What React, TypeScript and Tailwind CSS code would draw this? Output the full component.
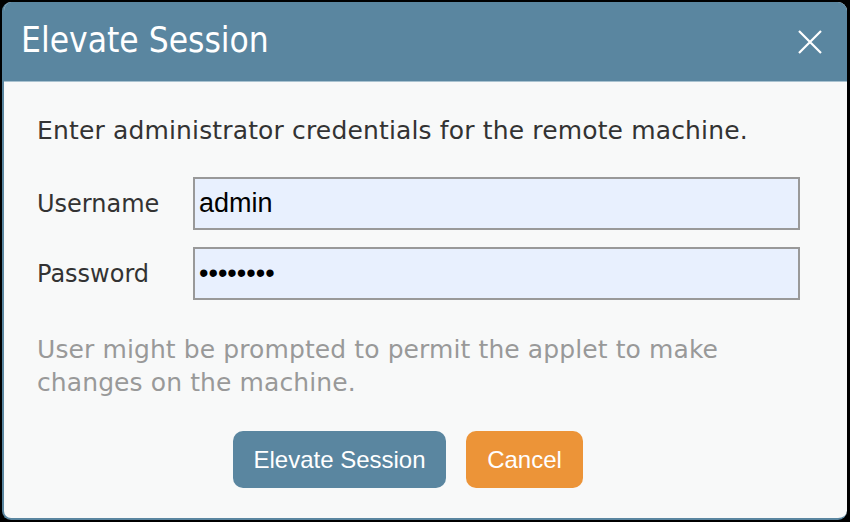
const CloseIcon = () => (
  <svg width="24" height="24" viewBox="0 0 24 24" className="text-white">
    <path d="M1 1 L23 23 M23 1 L1 23" stroke="currentColor" strokeWidth={2.2} fill="none" />
  </svg>
);

const App = () => {
  return (
    <div className="w-[850px] h-[522px] bg-black pt-[2px] pl-[2px]">
      <div className="w-[845px] h-[518px] rounded-[9px] overflow-hidden border-2 border-t-0 border-r-0 border-[#5a86a0] bg-[#f8f9f9] flex flex-col">
        {/* Header */}
        <div className="h-[80px] shrink-0 bg-[#5a86a0] border-b border-[#a9c2d0] flex items-center justify-between pl-[17px] pr-[25px]">
          <h1 className="text-[35px] leading-none text-white pb-[2px] font-['DejaVu_Sans_Condensed','DejaVu_Sans',sans-serif]">
            Elevate Session
          </h1>
          <CloseIcon />
        </div>

        {/* Body */}
        <div className="flex flex-col pl-[33px] pr-[45px] pt-[34px] font-['DejaVu_Sans',sans-serif]">
          <p className="text-[25px] leading-[30px] tracking-[0.15px] text-[#333]">
            Enter administrator credentials for the remote machine.
          </p>

          <div className="mt-[31px] flex flex-col gap-[17px]">
            <div className="flex items-center">
              <label className="w-[156px] text-[24px] text-[#333]">Username</label>
              <input
                className="w-[607px] h-[53px] border-2 border-[#999] bg-[#e8f0fe] px-[4px] text-[27px] text-black outline-none font-['Liberation_Sans',sans-serif]"
                defaultValue="admin"
              />
            </div>
            <div className="flex items-center">
              <label className="w-[156px] text-[24px] text-[#333]">Password</label>
              <input
                type="password"
                className="w-[607px] h-[53px] border-2 border-[#999] bg-[#e8f0fe] px-[4px] text-[27px] text-black outline-none font-['Liberation_Sans',sans-serif]"
                defaultValue="password"
              />
            </div>
          </div>

          <p className="mt-[33px] text-[25px] leading-[33px] tracking-[0.1px] text-[#999] w-[720px]">
            User might be prompted to permit the applet to make changes on the machine.
          </p>

          <div className="mt-[32px] flex justify-center gap-[20px] pr-[23px]">
            <button className="w-[213px] h-[57px] rounded-[10px] bg-[#5a86a0] text-white text-[24px] font-['Liberation_Sans',sans-serif]">
              Elevate Session
            </button>
            <button className="w-[117px] h-[57px] rounded-[10px] bg-[#ec9438] text-white text-[24px] font-['Liberation_Sans',sans-serif]">
              Cancel
            </button>
          </div>
        </div>
      </div>
    </div>
  );
};

export default App;
